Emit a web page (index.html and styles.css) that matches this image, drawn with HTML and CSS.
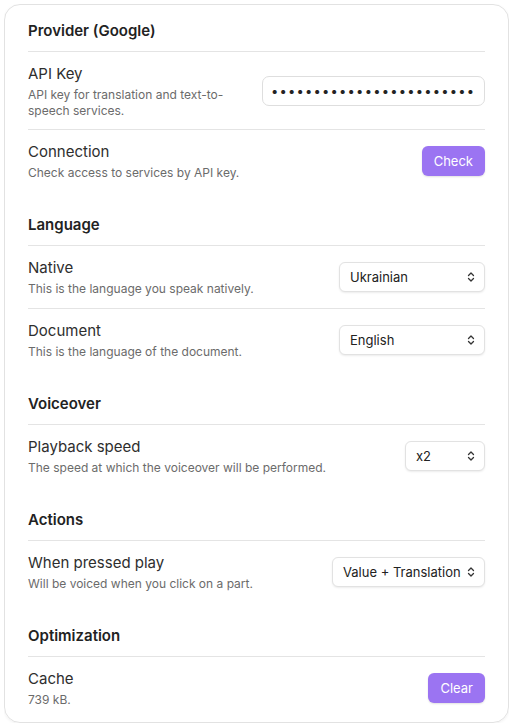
FILE: index.html
```html
<!DOCTYPE html>
<html lang="en">
<head>
<meta charset="utf-8">
<title>Settings</title>
<link rel="stylesheet" href="styles.css">
</head>
<body>
<div class="card">
  <section class="section">
    <h2 class="heading">Provider (Google)</h2>
    <div class="row">
      <div class="info">
        <div class="label">API Key</div>
        <div class="desc desc-narrow">API key for translation and text-to-speech services.</div>
      </div>
      <input class="input" type="password" value="abcdefghijklmnopqrstuvwxyz12" readonly>
    </div>
    <div class="row">
      <div class="info">
        <div class="label">Connection</div>
        <div class="desc">Check access to services by API key.</div>
      </div>
      <button class="btn">Check</button>
    </div>
  </section>

  <section class="section">
    <h2 class="heading">Language</h2>
    <div class="row">
      <div class="info">
        <div class="label">Native</div>
        <div class="desc">This is the language you speak natively.</div>
      </div>
      <div class="select select-lang"><span>Ukrainian</span><svg class="chev" viewBox="0 0 10 14" width="10" height="14"><path d="M2.5 5.5 5 3l2.5 2.5M2.5 8.5 5 11l2.5-2.5" fill="none" stroke="#333" stroke-width="1.3" stroke-linecap="round" stroke-linejoin="round"/></svg></div>
    </div>
    <div class="row">
      <div class="info">
        <div class="label">Document</div>
        <div class="desc">This is the language of the document.</div>
      </div>
      <div class="select select-lang"><span>English</span><svg class="chev" viewBox="0 0 10 14" width="10" height="14"><path d="M2.5 5.5 5 3l2.5 2.5M2.5 8.5 5 11l2.5-2.5" fill="none" stroke="#333" stroke-width="1.3" stroke-linecap="round" stroke-linejoin="round"/></svg></div>
    </div>
  </section>

  <section class="section">
    <h2 class="heading">Voiceover</h2>
    <div class="row">
      <div class="info">
        <div class="label">Playback speed</div>
        <div class="desc">The speed at which the voiceover will be performed.</div>
      </div>
      <div class="select select-speed"><span>x2</span><svg class="chev" viewBox="0 0 10 14" width="10" height="14"><path d="M2.5 5.5 5 3l2.5 2.5M2.5 8.5 5 11l2.5-2.5" fill="none" stroke="#333" stroke-width="1.3" stroke-linecap="round" stroke-linejoin="round"/></svg></div>
    </div>
  </section>

  <section class="section">
    <h2 class="heading">Actions</h2>
    <div class="row">
      <div class="info">
        <div class="label">When pressed play</div>
        <div class="desc">Will be voiced when you click on a part.</div>
      </div>
      <div class="select select-action"><span>Value + Translation</span><svg class="chev" viewBox="0 0 10 14" width="10" height="14"><path d="M2.5 5.5 5 3l2.5 2.5M2.5 8.5 5 11l2.5-2.5" fill="none" stroke="#333" stroke-width="1.3" stroke-linecap="round" stroke-linejoin="round"/></svg></div>
    </div>
  </section>

  <section class="section">
    <h2 class="heading">Optimization</h2>
    <div class="row">
      <div class="info">
        <div class="label">Cache</div>
        <div class="desc">739 kB.</div>
      </div>
      <button class="btn">Clear</button>
    </div>
  </section>
</div>
</body>
</html>
```
FILE: styles.css
```css
* { box-sizing: border-box; }
html, body { background: #fff; }
body {
  margin: 4px;
  font-family: Inter, "Noto Sans", sans-serif;
  color: #2a2a2a;
}
.card {
  border: 1px solid #e2e2e2;
  border-radius: 16px;
  padding: 16px 23px 3px;
  box-shadow: 0 1px 3px rgba(0,0,0,0.06);
}
.section + .section { margin-top: 23px; }
.heading {
  margin: 0;
  font-size: 15px;
  line-height: 20px;
  font-weight: 600;
  color: #222;
  padding-bottom: 10px;
}
.row {
  display: flex;
  align-items: center;
  justify-content: space-between;
  gap: 16px;
  border-top: 1px solid #e4e4e4;
  padding: 12px 0;
}
.info { min-width: 0; }
.label {
  font-size: 15px;
  line-height: 20px;
  color: #2e2e2e;
  margin-bottom: 3px;
}
.desc {
  font-size: 12px;
  line-height: 15px;
  color: #6b6b6b;
}
.desc-narrow { max-width: 215px; line-height: 16px; margin-bottom: -2px; }
.input {
  width: 223px;
  height: 30px;
  flex: none;
  border: 1px solid #dedede;
  border-radius: 7px;
  padding: 0 8px;
  font-family: Inter, sans-serif;
  font-size: 13px;
  letter-spacing: 1.2px;
  color: #222;
  background: #fff;
  outline: none;
}
.btn {
  flex: none;
  height: 30px;
  padding: 0 12px;
  border: none;
  border-radius: 6px;
  background: #9b74f2;
  color: #fff;
  font-family: Inter, sans-serif;
  font-size: 13px;
  box-shadow: 0 1px 2px rgba(0,0,0,0.12);
}
.select {
  flex: none;
  height: 30px;
  display: flex;
  align-items: center;
  justify-content: space-between;
  padding: 0 8px 0 10px;
  border: 1px solid #e2e2e2;
  border-radius: 6px;
  background: #fff;
  box-shadow: 0 1px 2px rgba(0,0,0,0.08);
  font-size: 13px;
  color: #222;
}
.chev { display: block; }
.select-lang { width: 146px; }
.select-speed { width: 80px; }
.select-action { width: 153px; }
```
